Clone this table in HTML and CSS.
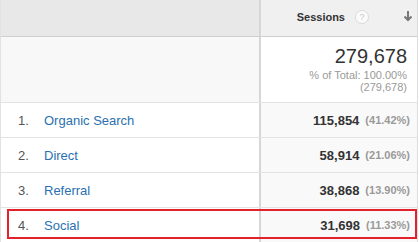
FILE: index.html
```html
<!DOCTYPE html>
<html>
<head>
<meta charset="utf-8">
<link rel="stylesheet" href="styles.css">
</head>
<body>
<div class="table">
  <div class="row head">
    <div class="cell dim"></div>
    <div class="cell metric">
      <span class="metric-name">Sessions</span>
      <span class="help">?</span>
      <svg class="sort" width="10" height="12" viewBox="0 0 10 12"><path d="M5 1v9M1.5 6.5L5 10l3.5-3.5" fill="none" stroke="#777" stroke-width="2"/></svg>
    </div>
  </div>
  <div class="row summary">
    <div class="cell dim"></div>
    <div class="cell metric">
      <div class="total">279,678</div>
      <div class="sub">% of Total: 100.00%</div>
      <div class="sub">(279,678)</div>
    </div>
  </div>
  <div class="row data">
    <div class="cell dim"><span class="idx">1.</span><a class="link">Organic Search</a></div>
    <div class="cell metric"><span class="val">115,854</span><span class="pct">(41.42%)</span></div>
  </div>
  <div class="row data">
    <div class="cell dim"><span class="idx">2.</span><a class="link">Direct</a></div>
    <div class="cell metric"><span class="val">58,914</span><span class="pct">(21.06%)</span></div>
  </div>
  <div class="row data">
    <div class="cell dim"><span class="idx">3.</span><a class="link">Referral</a></div>
    <div class="cell metric"><span class="val">38,868</span><span class="pct">(13.90%)</span></div>
  </div>
  <div class="row data highlight">
    <div class="cell dim"><span class="idx">4.</span><a class="link">Social</a></div>
    <div class="cell metric"><span class="val">31,698</span><span class="pct">(11.33%)</span></div>
  </div>
</div>
</body>
</html>
```
FILE: styles.css
```css
html, body {
  margin: 0;
  padding: 0;
  background: #fff;
}
body {
  font-family: "Liberation Sans", Arial, sans-serif;
  color: #333;
}
.table {
  width: 418px;
  border-left: 1px solid #e2e2e2;
  border-right: 1px solid #dcdcdc;
  box-sizing: border-box;
}
.row {
  display: flex;
  box-sizing: border-box;
  border-bottom: 1px solid #e3e3e3;
  position: relative;
}
.cell {
  box-sizing: border-box;
  display: flex;
  align-items: center;
}
.dim {
  width: 260px;
  border-right: 2px solid #d6d6d6;
}
.metric {
  flex: 1;
  justify-content: flex-end;
}
.head {
  height: 37px;
  background: #e8e8e8;
  border-bottom: 1px solid #cfcfcf;
}
.head .metric {
  background: #f0f0f0;
  padding: 0 4px 3px 0;
}
.metric-name {
  font-size: 11px;
  font-weight: bold;
  color: #333;
}
.help {
  width: 12px;
  height: 12px;
  border-radius: 50%;
  border: 1px solid #dadada;
  background: #fbfbfb;
  color: #c8c8c8;
  font-size: 9px;
  line-height: 12px;
  text-align: center;
  margin-left: 10px;
  margin-right: 34px;
}
.sort {
  margin-bottom: 2px;
}
.summary {
  height: 66px;
}
.summary .dim {
  background: #f8f8f8;
}
.summary .metric {
  flex-direction: column;
  align-items: flex-end;
  justify-content: flex-start;
  padding: 6px 10px 0 0;
}
.total {
  font-size: 20px;
  color: #333;
  line-height: 26px;
}
.sub {
  font-size: 11px;
  color: #999;
  line-height: 12px;
}
.data {
  height: 35px;
}
.data .metric {
  background: #f9f9f9;
  padding-right: 7px;
}
.idx {
  font-size: 13px;
  color: #555;
  width: 26px;
  margin-left: 17px;
}
.link {
  font-size: 13px;
  color: #2a70b0;
}
.val {
  font-size: 13px;
  font-weight: bold;
  color: #333;
}
.pct {
  font-size: 11px;
  font-weight: bold;
  color: #999;
  margin-left: 6px;
}
.highlight::after {
  content: "";
  position: absolute;
  left: 6px;
  right: 0;
  top: 1px;
  bottom: 3px;
  border: 2px solid #e3202c;
}
```
